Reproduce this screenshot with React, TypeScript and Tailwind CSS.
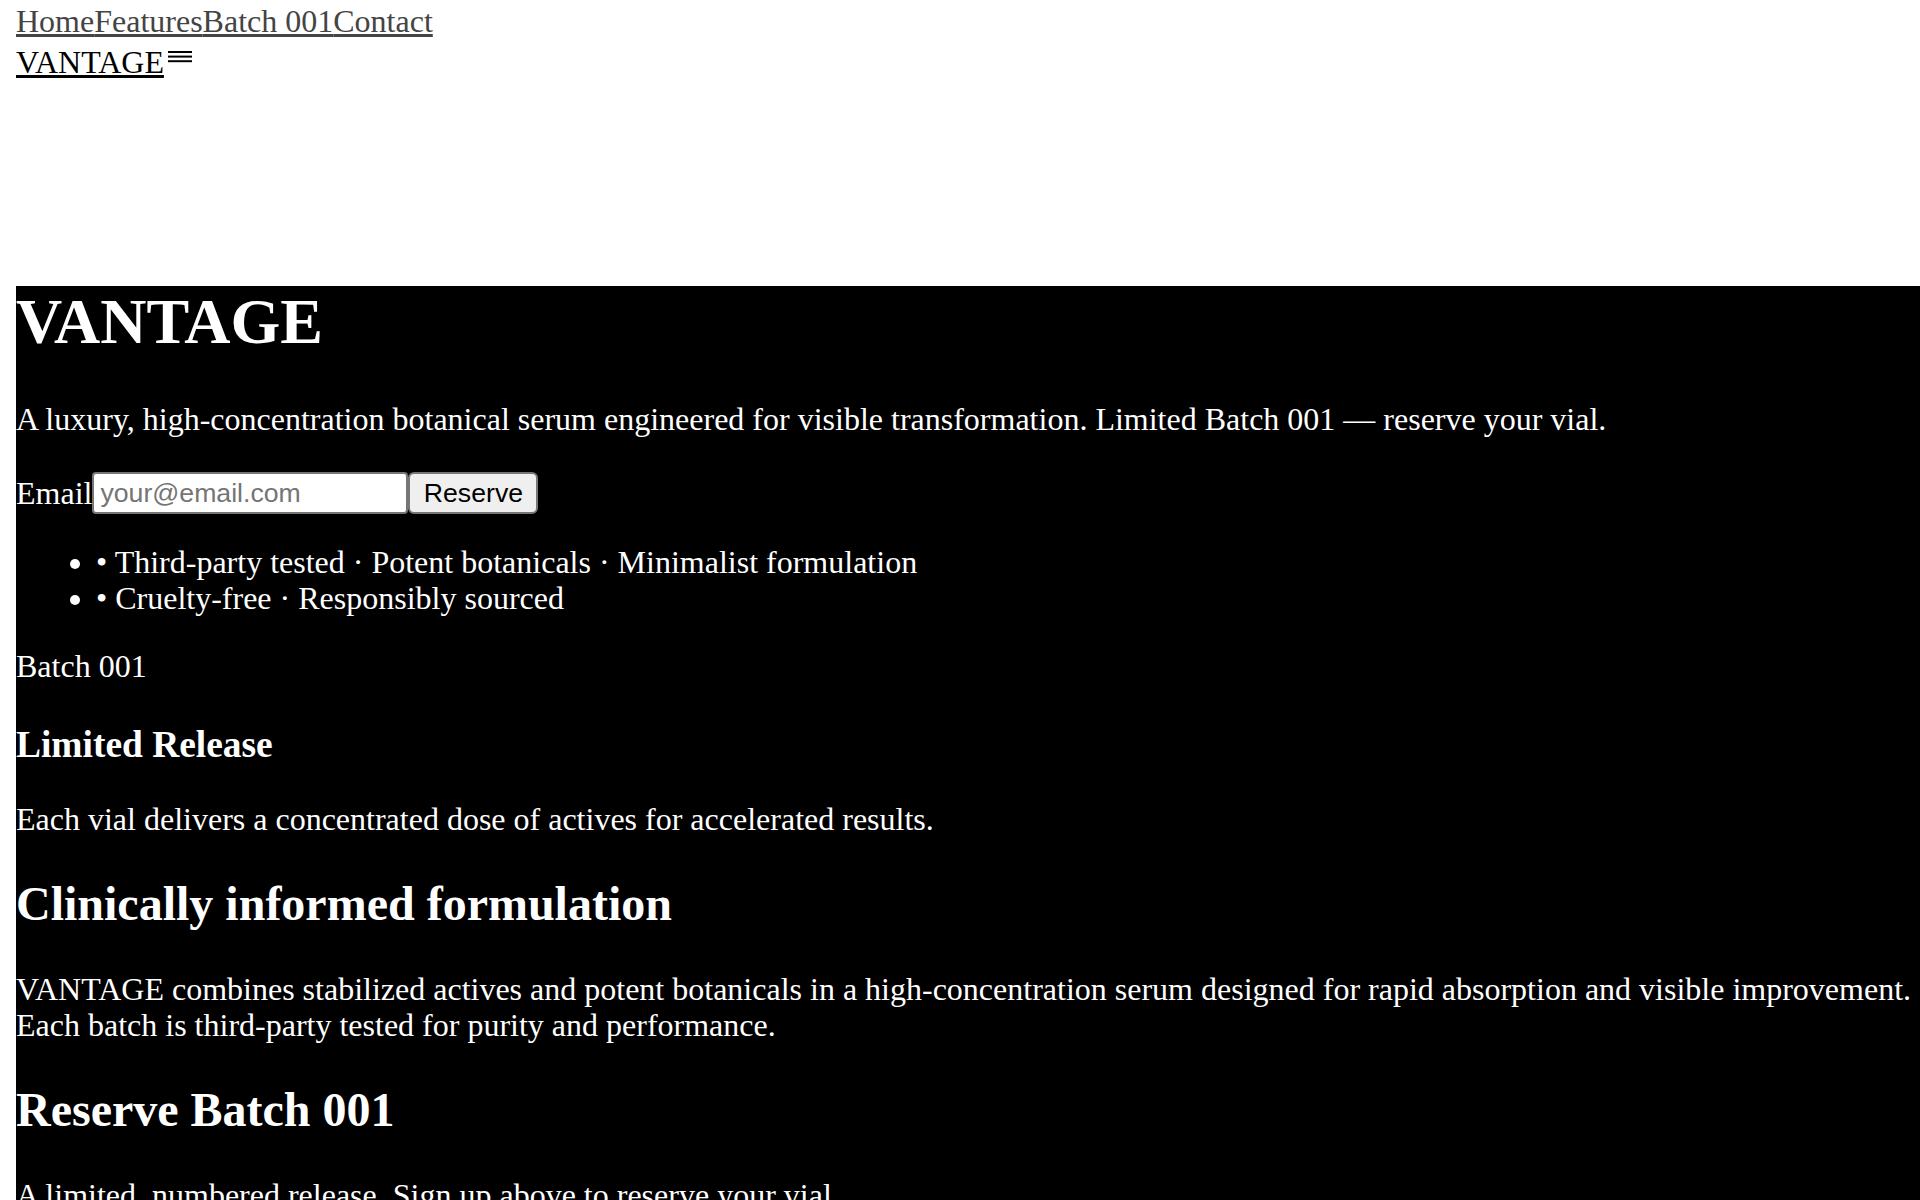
import React from "react";

const navLinks = ["Home", "Features", "Batch 001", "Contact"];

const highlights = [
  "• Third-party tested · Potent botanicals · Minimalist formulation",
  "• Cruelty-free · Responsibly sourced",
];

function MenuIcon() {
  return (
    <svg width="12" height="6" viewBox="0 0 12 6" className="block" aria-hidden="true">
      <line x1="0" y1="0.5" x2="12" y2="0.5" stroke="black" strokeWidth="1" />
      <line x1="0" y1="2.8" x2="12" y2="2.8" stroke="black" strokeWidth="1" />
      <line x1="0" y1="5.1" x2="12" y2="5.1" stroke="black" strokeWidth="1" />
    </svg>
  );
}

export default function App() {
  return (
    <div className="[zoom:2] bg-white text-black font-['Liberation_Serif','Times_New_Roman',serif] text-[16px] leading-[1.13] min-h-[600px]">
      {/* Header */}
      <header className="pl-[8px]">
        <nav className="pt-[1.5px]">
          {navLinks.map((link) => (
            <a key={link} href="#" className="text-[#444] underline">
              {link}
            </a>
          ))}
        </nav>
        <div className="flex items-start pt-[2.3px]">
          <a href="#" className="text-black underline">
            VANTAGE
          </a>
          <button type="button" className="ml-[2px] mt-[3.8px] p-0 bg-transparent border-0" aria-label="Menu">
            <MenuIcon />
          </button>
        </div>
      </header>

      {/* Hero */}
      <section className="mt-[103px] ml-[8px] bg-black text-white pb-[40px]">
        <h1 className="text-[32px] font-bold leading-[1.13] mb-[21.44px]">VANTAGE</h1>
        <p className="mb-[16px]">
          A luxury, high-concentration botanical serum engineered for visible transformation. Limited Batch 001 — reserve your vial.
        </p>
        <form className="pt-[1.2px] h-[21.2px] flex items-start" onSubmit={(e) => e.preventDefault()}>
          <label htmlFor="email" className="leading-[21px]">Email</label>
          <input
            id="email"
            type="email"
            placeholder="your@email.com"
            className="w-[158px] h-[21px] px-[3px] pt-[1px] bg-white text-black border border-[#767676] rounded-[2px] font-['Liberation_Sans',Arial,sans-serif] text-[13.333px] placeholder:text-[#757575]"
          />
          <button
            type="submit"
            className="w-[65px] h-[21px] px-[6px] bg-[#efefef] text-black border border-[#767676] rounded-[3px] font-['Liberation_Sans',Arial,sans-serif] text-[13.333px]"
          >
            Reserve
          </button>
        </form>
        <ul className="list-disc pl-[40px] my-[16px]">
          {highlights.map((item) => (
            <li key={item}>{item}</li>
          ))}
        </ul>
        <p className="mb-[19.9px]">Batch 001</p>
        <h3 className="text-[18.72px] font-bold leading-[1.13] mb-[17.5px]">Limited Release</h3>
        <p className="mb-[19.92px]">Each vial delivers a concentrated dose of actives for accelerated results.</p>

        <h2 className="text-[24px] font-bold leading-[1.13] mb-[19.92px]">Clinically informed formulation</h2>
        <p className="mb-[19.92px]">
          VANTAGE combines stabilized actives and potent botanicals in a high-concentration serum designed for rapid absorption and visible improvement. Each batch is third-party tested for purity and performance.
        </p>

        <h2 className="text-[24px] font-bold leading-[1.13] mb-[19.92px]">Reserve Batch 001</h2>
        <p>A limited, numbered release. Sign up above to reserve your vial.</p>
      </section>
    </div>
  );
}
